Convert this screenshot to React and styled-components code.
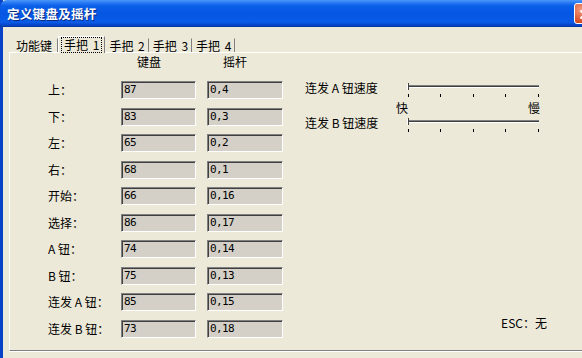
import React from "react";
import styled, { createGlobalStyle } from "styled-components";

const GlobalStyle = createGlobalStyle`
	html, body {
		margin: 0;
		padding: 0;
		background: #ece9d8;
		overflow: hidden;
	}
	#root {
		width: 582px;
		height: 358px;
		overflow: hidden;
	}
`;

const rows = [
	{ label: "上：", key: "87", pad: "0,4" },
	{ label: "下：", key: "83", pad: "0,3" },
	{ label: "左：", key: "65", pad: "0,2" },
	{ label: "右：", key: "68", pad: "0,1" },
	{ label: "开始：", key: "66", pad: "0,16" },
	{ label: "选择：", key: "86", pad: "0,17" },
	{ label: "A 钮：", key: "74", pad: "0,14" },
	{ label: "B 钮：", key: "75", pad: "0,13" },
	{ label: "连发 A 钮：", key: "85", pad: "0,15" },
	{ label: "连发 B 钮：", key: "73", pad: "0,18" },
];

const tabs = ["功能键", "手把 1", "手把 2", "手把 3", "手把 4"];

function Slider() {
	const ticks = [1, 33, 66, 98, 131];
	return (
		<svg width="134" height="16" viewBox="0 0 134 16">
			<rect x="1" y="2" width="131" height="1" fill="#808080" />
			<rect x="1" y="3" width="131" height="1" fill="#404040" />
			<rect x="1" y="4" width="131" height="1" fill="#ffffff" />
			<rect x="0" y="1" width="1" height="6" fill="#ffffff" />
			<rect x="1" y="0" width="1" height="7" fill="#404040" />
			{ticks.map((x) => (
				<rect key={x} x={x} y="11" width="1" height="3" fill="#000" />
			))}
		</svg>
	);
}

export default function App() {
	return (
		<>
			<GlobalStyle />
			<Window>
				<TitleBar>
					<Title>定义键盘及摇杆</Title>
					<CloseButton>
						<svg width="21" height="21" viewBox="0 0 21 21">
							<path d="M6 6 L15 15 M15 6 L6 15" stroke="#fff" strokeWidth="2.2" />
						</svg>
					</CloseButton>
				</TitleBar>
				<Body>
					<TabRow>
						{tabs.map((t, i) => (
							<Tab key={t} $active={i === 1} $first={i === 0}>
								{i === 1 ? <Focus>{t}</Focus> : t}
							</Tab>
						))}
					</TabRow>
					<Panel>
						<KeyGrid>
							<span />
							<Header>键盘</Header>
							<Header>摇杆</Header>
							{rows.map((r) => (
								<React.Fragment key={r.label}>
									<RowLabel>{r.label}</RowLabel>
									<Field>{r.key}</Field>
									<Field>{r.pad}</Field>
								</React.Fragment>
							))}
						</KeyGrid>
						<RightCol>
							<SpeedRow>
								<SpeedLabel>连发 A 钮速度</SpeedLabel>
								<SliderWrap>
									<Slider />
								</SliderWrap>
							</SpeedRow>
							<Scale>
								<span>快</span>
								<span>慢</span>
							</Scale>
							<SpeedRow $top="2px">
								<SpeedLabel>连发 B 钮速度</SpeedLabel>
								<SliderWrap>
									<Slider />
								</SliderWrap>
							</SpeedRow>
							<Esc>ESC：无</Esc>
						</RightCol>
					</Panel>
				</Body>
			</Window>
		</>
	);
}

const Window = styled.div`
	width: 600px;
	height: 380px;
	display: flex;
	flex-direction: column;
	background: #ece9d8;
	border-left: 3px solid #0842c8;
	box-sizing: border-box;
	font-family: "Noto Sans CJK SC", "Noto Sans", sans-serif;
	font-size: 12px;
	color: #000;
`;

const TitleBar = styled.div`
	height: 27px;
	margin-left: -3px;
	flex-shrink: 0;
	display: flex;
	align-items: center;
	justify-content: space-between;
	padding: 0 5px 0 7px;
	box-sizing: border-box;
	border-radius: 7px 7px 0 0;
	background: linear-gradient(
		to bottom,
		#4a98f8 0%,
		#2a7af4 10%,
		#0a5fe8 22%,
		#0656e4 50%,
		#0a5ae8 82%,
		#0446c8 93%,
		#02339c 100%
	);
`;

const Title = styled.div`
	color: #fff;
	font-weight: bold;
	font-size: 12.5px;
	letter-spacing: 0.3px;
	text-shadow: 1px 1px 0 #0a2a80;
`;

const CloseButton = styled.div`
	width: 21px;
	height: 21px;
	box-sizing: border-box;
	border: 1px solid #fff;
	border-radius: 3px;
	background: radial-gradient(circle at 30% 30%, #f19a7e, #d8532c 60%, #c23d1c);
	display: flex;
`;

const Body = styled.div`
	flex: 1;
	display: flex;
	flex-direction: column;
	padding: 9px 0 0 6px;
`;

const TabRow = styled.div`
	display: flex;
	align-items: flex-end;
	height: 16px;
	padding-left: 1px;
	position: relative;
	z-index: 1;
`;

const Tab = styled.div`
	height: ${(p) => (p.$active ? "17px" : "14px")};
	margin-bottom: ${(p) => (p.$active ? "-1px" : "0")};
	padding: 0 ${(p) => (p.$active || !p.$first ? "3px" : "5px")};
	display: flex;
	align-items: center;
	box-sizing: border-box;
	background: #ece9d8;
	border-top: 1px solid ${(p) => (p.$active ? "#fff" : "transparent")};
	border-left: 1px solid ${(p) => (p.$active ? "#fff" : "transparent")};
	border-right: 1px solid #808080;
	line-height: 12px;
	white-space: nowrap;
	word-spacing: 2px;
`;

const Focus = styled.span`
	outline: 1px dotted #000;
	outline-offset: 0;
	padding: 1px 2px;
	line-height: 12px;
`;

const Panel = styled.div`
	flex: 0 0 299px;
	display: flex;
	box-sizing: border-box;
	border-top: 1px solid #fff;
	border-left: 1px solid #fff;
	border-bottom: 1px solid #808080;
	box-shadow: 0 1px 0 #fff;
`;

const KeyGrid = styled.div`
	display: grid;
	grid-template-columns: 62px 75px 76px;
	grid-template-rows: 17.5px repeat(10, 18px);
	column-gap: 11px;
	row-gap: 8.5px;
	padding: 2px 0 0 38px;
`;

const Header = styled.div`
	padding-left: 16px;
	line-height: 14px;
	align-self: start;
`;

const RowLabel = styled.div`
	display: flex;
	align-items: center;
	line-height: 14px;
	white-space: nowrap;
`;

const Field = styled.div`
	box-sizing: border-box;
	height: 18px;
	background: #d4d0c8;
	border-top: 1px solid #808080;
	border-left: 1px solid #808080;
	border-bottom: 1px solid #fff;
	border-right: 1px solid #fff;
	box-shadow: inset 1px 1px 0 #404040;
	padding: 1px 0 0 2px;
	font-family: "DejaVu Sans Mono", monospace;
	font-size: 11px;
	line-height: 14px;
	letter-spacing: -0.6px;
`;

const RightCol = styled.div`
	width: 242px;
	margin-left: 22px;
	display: flex;
	flex-direction: column;
	padding: 28px 0 20px 0;
	box-sizing: border-box;
`;

const SpeedRow = styled.div`
	display: flex;
	align-items: flex-start;
	margin-top: ${(p) => p.$top || "0"};
`;

const SpeedLabel = styled.div`
	width: 102px;
	line-height: 14px;
	white-space: nowrap;
`;

const SliderWrap = styled.div`
	margin-top: 2px;
	display: flex;
`;

const Scale = styled.div`
	margin: 3px 0 0 91px;
	width: 144px;
	display: flex;
	justify-content: space-between;
	line-height: 12px;
`;

const Esc = styled.div`
	margin-top: auto;
	align-self: flex-end;
	line-height: 14px;
`;
